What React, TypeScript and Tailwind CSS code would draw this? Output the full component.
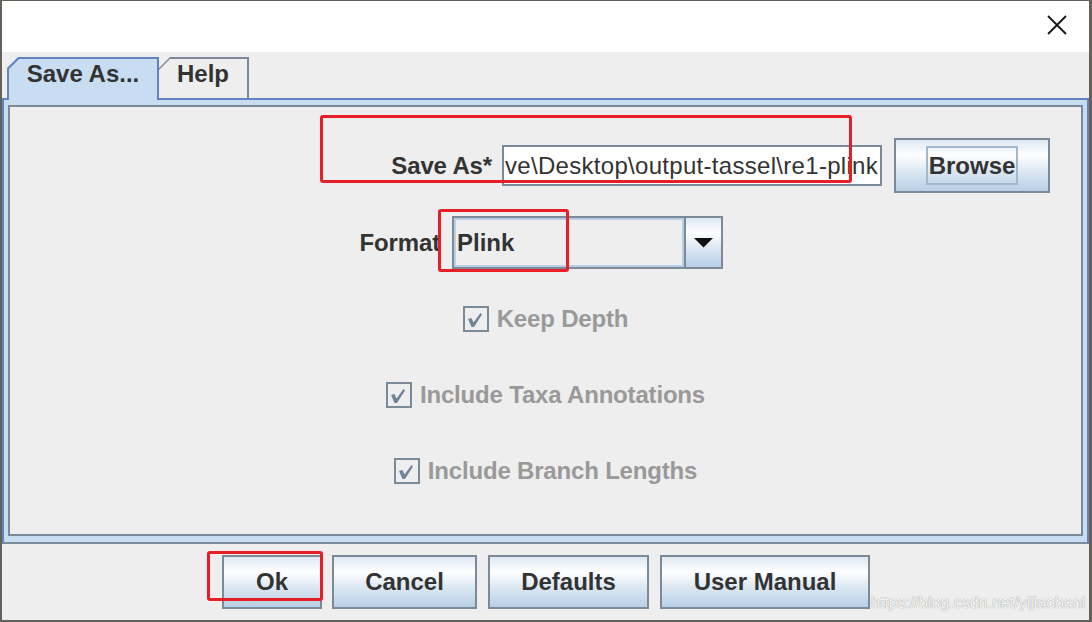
import React from "react";

const btnBg =
  "bg-[linear-gradient(to_bottom,#dde8f3_0%,#ffffff_30%,#dde8f3_60%,#b8cfe5_100%)]";

function Check({ label }: { label: string }) {
  return (
    <div className="h-[30px] flex items-center justify-center">
      <div className="w-[26px] h-[26px] border-2 border-[#7a8a99] bg-[#eeeeee] flex items-center justify-center">
        <svg width="22" height="22" viewBox="0 0 22 22">
          <path d="M3 11 L6.5 10 L8.5 14.5 L15.5 5 L17 6.5 L9 19 L6.5 19 Z" fill="#70839a" />
        </svg>
      </div>
      <span className="ml-[8px] text-[24px] leading-[26px] font-bold tracking-[-0.18px] text-[#999999]">{label}</span>
    </div>
  );
}

function Btn({ label, w, ml }: { label: string; w: string; ml: string }) {
  return (
    <div
      className={`${w} ${ml} h-[54px] border-2 border-[#7a8a99] ${btnBg} flex items-center justify-center text-[24px] leading-[24px] font-bold text-[#333333]`}
    >
      {label}
    </div>
  );
}

export default function App() {
  return (
    <div className="relative w-[1092px] h-[622px] bg-[#62625a] overflow-hidden font-['Liberation_Sans',Arial,sans-serif]">
      <div className="ml-[2px] mt-[1px] w-[1087px] h-[619px] bg-[#eeeeee] flex flex-col">
        {/* title bar */}
        <div className="h-[51px] bg-white flex items-start justify-end shrink-0">
          <svg className="mt-[14px] mr-[22px]" width="20" height="20" viewBox="0 0 20 20">
            <path d="M1 1L19 19M19 1L1 19" stroke="#151515" strokeWidth="1.8" />
          </svg>
        </div>

        {/* tabs */}
        <div className="mt-[5px] h-[41px] flex items-start pl-[5px] relative z-10 shrink-0">
          <div className="w-[152px] h-[43px] bg-[#6382bf] [clip-path:polygon(11px_0,100%_0,100%_100%,0_100%,0_11px)] pt-[2px] px-[2px]">
            <div className="h-full bg-[#c8ddf2] [clip-path:polygon(10px_0,100%_0,100%_100%,0_100%,0_10px)] flex justify-center pt-[3px] text-[24px] leading-[24px] font-bold text-[#333333]">
              Save As...
            </div>
          </div>
          <div className="w-[90px] h-[41px] bg-[#7a8a99] [clip-path:polygon(11px_0,100%_0,100%_100%,0_100%,0_11px)] pt-[2px] pr-[2px]">
            <div className="h-full bg-[#eeeeee] [clip-path:polygon(11px_0,100%_0,100%_100%,0_100%,0_11px)] flex justify-center pt-[3px] text-[24px] leading-[24px] font-bold text-[#333333]">
              Help
            </div>
          </div>
        </div>

        {/* panel */}
        <div className="h-[446px] shrink-0 border-2 border-[#6382bf] border-b-[#7a8a99] bg-[#c8ddf2] pt-[5px] pb-[6px] px-[4px]">
          <div className="h-full border-2 border-[#7a8a99] bg-[#eeeeee] flex flex-col">
            {/* Save As row */}
            <div className="mt-[31px] h-[55px] flex items-center">
              <div className="w-[482px] text-right text-[24px] leading-[26px] font-bold tracking-[-0.15px] text-[#333333]">Save As*</div>
              <div className="ml-[10px] w-[380px] h-[41px] border-2 border-[#7a8a99] bg-white overflow-hidden whitespace-nowrap flex items-center pl-[1px] text-[24px] leading-[26px] tracking-[0.3px] text-[#333333]">
                ve\Desktop\output-tassel\re1-plink
              </div>
              <div className={`ml-[12px] w-[156px] h-[55px] border-2 border-[#7a8a99] ${btnBg} flex items-center justify-center`}>
                <div className="w-[92px] h-[39px] border-2 border-[#a3b8cc] flex items-center justify-center text-[24px] leading-[24px] font-bold text-[#333333]">
                  Browse
                </div>
              </div>
            </div>

            {/* Format row */}
            <div className="mt-[23px] h-[53px] flex items-center">
              <div className="w-[430px] text-right text-[24px] leading-[26px] font-bold tracking-[-0.15px] text-[#333333]">Format</div>
              <div className="ml-[12px] w-[271px] h-[53px] border-2 border-[#7a8a99] flex">
                <div className="flex-1 border-2 border-[#b8cfe5] bg-[#eeeeee] flex items-center pl-[1px] text-[24px] leading-[26px] font-bold text-[#333333]">
                  Plink
                </div>
                <div className={`w-[37px] border-l-2 border-[#7a8a99] ${btnBg} flex items-center justify-center`}>
                  <svg width="19" height="10" viewBox="0 0 19 10">
                    <polygon points="0,0 19,0 9.5,9.5" fill="#111111" />
                  </svg>
                </div>
              </div>
            </div>

            <div className="mt-[35px]">
              <Check label="Keep Depth" />
            </div>
            <div className="mt-[46px]">
              <Check label="Include Taxa Annotations" />
            </div>
            <div className="mt-[46px]">
              <Check label="Include Branch Lengths" />
            </div>
          </div>
        </div>

        {/* buttons */}
        <div className="flex items-start pt-[11px] pl-[220px]">
          <Btn label="Ok" w="w-[100px]" ml="ml-0" />
          <Btn label="Cancel" w="w-[145px]" ml="ml-[10px]" />
          <Btn label="Defaults" w="w-[161px]" ml="ml-[11px]" />
          <Btn label="User Manual" w="w-[210px]" ml="ml-[11px]" />
        </div>
      </div>

      {/* annotation overlays */}
      <div className="absolute left-[320px] top-[115px] w-[532px] h-[68px] border-[3px] border-[#e81e27] rounded-[3px]" />
      <div className="absolute left-[438px] top-[209px] w-[131px] h-[63px] border-[3px] border-[#e81e27] rounded-[3px]" />
      <div className="absolute left-[207px] top-[551px] w-[116px] h-[50px] border-[3px] border-[#e81e27] rounded-[3px]" />

      {/* watermark */}
      <div className="absolute left-[871px] top-[595px] text-[16px] leading-[16px] text-[#f6f6f6] whitespace-nowrap [text-shadow:0_0_1px_rgba(0,0,0,0.5)]">
        https://blog.csdn.net/yijiaobani
      </div>
    </div>
  );
}
